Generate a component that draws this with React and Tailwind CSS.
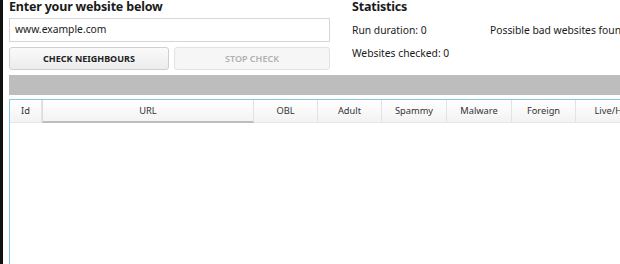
const columns = [
  { label: 'Id', w: 'w-[32px]' },
  { label: 'URL', w: 'w-[212px]', active: true },
  { label: 'OBL', w: 'w-[64px]' },
  { label: 'Adult', w: 'w-[64px]' },
  { label: 'Spammy', w: 'w-[65px]' },
  { label: 'Malware', w: 'w-[65px]' },
  { label: 'Foreign', w: 'w-[64px]' },
  { label: 'Live/History', w: 'w-[90px]' },
];

export default function App() {
  return (
    <div className="w-[620px] h-[264px] overflow-hidden bg-white flex font-['Noto_Sans',sans-serif] text-[#1a1a1a]">
      <div className="w-[3px] shrink-0 bg-[#111]" />
      <div className="flex-1 flex flex-col pl-[6px] min-w-0">
        {/* Top panel */}
        <div className="flex">
          <div className="w-[321px] shrink-0 flex flex-col">
            <h2 className="text-[12.5px] font-bold leading-[13px] h-[18px] tracking-[-0.2px]">Enter your website below</h2>
            <div className="h-[24px] border border-[#d6d6d6] bg-white flex items-center px-[5px] text-[10.3px]">
              www.example.com
            </div>
            <div className="flex gap-[5px] mt-[5px]">
              <button className="w-[160px] h-[23px] rounded-[3px] border border-[#cfcfcf] bg-gradient-to-b from-[#fafafa] to-[#ececec] text-[9px] font-bold text-[#222]">
                CHECK NEIGHBOURS
              </button>
              <button className="flex-1 h-[23px] rounded-[3px] border border-[#e2e2e2] bg-[#f6f6f6] text-[9px] font-semibold text-[#b0b0b0]">
                STOP CHECK
              </button>
            </div>
          </div>
          <div className="ml-[22px] flex flex-col">
            <h2 className="text-[12.5px] font-bold leading-[13px] h-[18px] tracking-[-0.2px]">Statistics</h2>
            <div className="flex text-[10.3px] leading-[14px] mt-[5px] whitespace-nowrap">
              <span className="w-[138px]">Run duration: 0</span>
              <span>Possible bad websites found: 0</span>
            </div>
            <div className="text-[10.3px] leading-[14px] mt-[9px]">Websites checked: 0</div>
          </div>
        </div>

        {/* Progress bar */}
        <div className="h-[20px] bg-[#bdbdbd] mt-[5px]" />

        {/* Results table */}
        <div className="mt-[4px] flex-1 border-t border-l border-[#86c5ee] bg-white">
          <div className="flex h-[23px] whitespace-nowrap">
            {columns.map((c) => (
              <div
                key={c.label}
                className={`${c.w} shrink-0 flex items-center justify-center text-[9.3px] text-[#333] border-r border-[#e3e3e3] bg-gradient-to-b from-white to-[#f3f3f3] ${
                  c.active ? 'border-b-[2px] border-b-[#bdbdbd] border-l border-l-[#dcdcdc]' : 'border-b border-b-[#e6e6e6]'
                }`}
              >
                {c.label}
              </div>
            ))}
          </div>
        </div>
      </div>
    </div>
  );
}
